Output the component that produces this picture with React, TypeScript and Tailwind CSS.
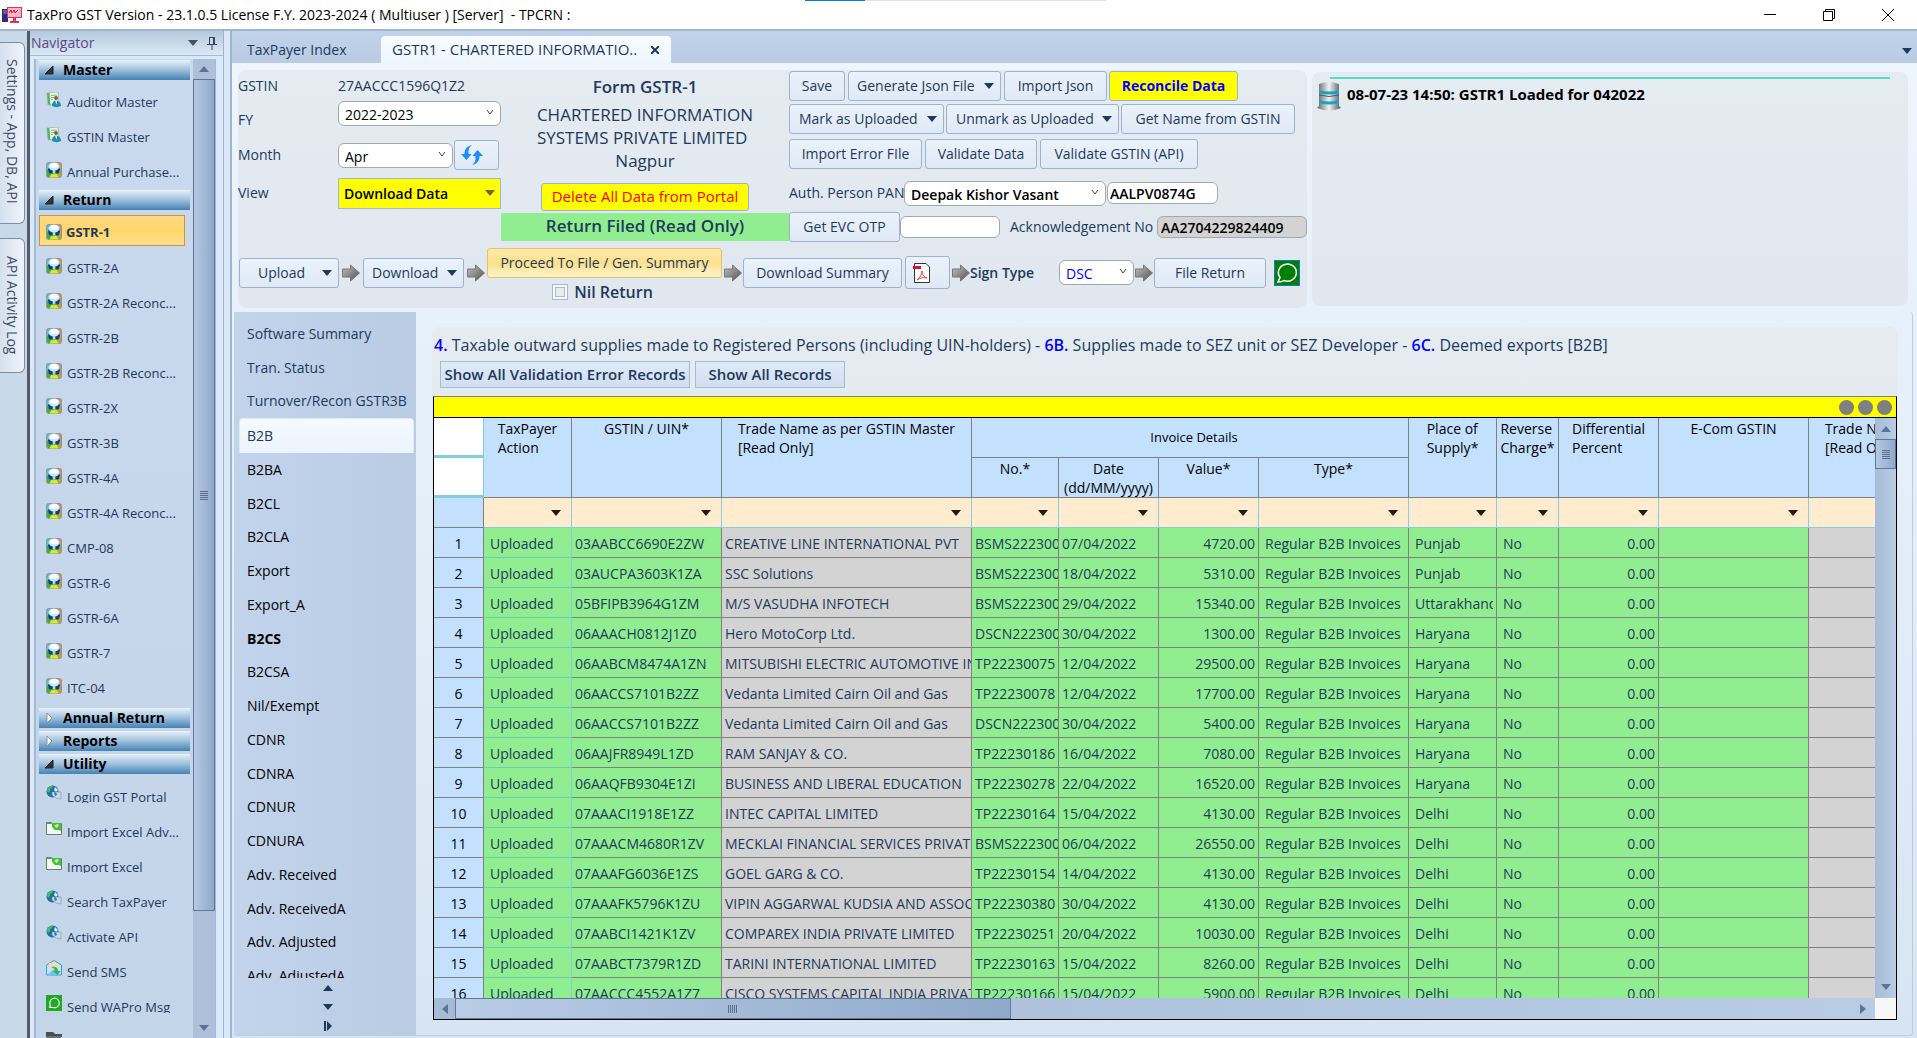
import type { ReactNode } from 'react';

type NavIconKind = 'user' | 'ball' | 'globe' | 'excel' | 'sms' | 'wa' | 'folder';

interface NavItem {
  label: string;
  icon: NavIconKind;
}

const masterItems: NavItem[] = [
  { label: 'Auditor Master', icon: 'user' },
  { label: 'GSTIN Master', icon: 'user' },
  { label: 'Annual Purchase...', icon: 'ball' },
];

const returnItems = [
  'GSTR-2A',
  'GSTR-2A Reconc...',
  'GSTR-2B',
  'GSTR-2B Reconc...',
  'GSTR-2X',
  'GSTR-3B',
  'GSTR-4A',
  'GSTR-4A Reconc...',
  'CMP-08',
  'GSTR-6',
  'GSTR-6A',
  'GSTR-7',
  'ITC-04',
];

const utilityItems: NavItem[] = [
  { label: 'Login GST Portal', icon: 'globe' },
  { label: 'Import Excel Adv...', icon: 'excel' },
  { label: 'Import Excel', icon: 'excel' },
  { label: 'Search TaxPayer', icon: 'globe' },
  { label: 'Activate API', icon: 'globe' },
  { label: 'Send SMS', icon: 'sms' },
  { label: 'Send WAPro Msg', icon: 'wa' },
  { label: '', icon: 'folder' },
];

const sections = [
  'Software Summary',
  'Tran. Status',
  'Turnover/Recon GSTR3B',
  'B2B',
  'B2BA',
  'B2CL',
  'B2CLA',
  'Export',
  'Export_A',
  'B2CS',
  'B2CSA',
  'Nil/Exempt',
  'CDNR',
  'CDNRA',
  'CDNUR',
  'CDNURA',
  'Adv. Received',
  'Adv. ReceivedA',
  'Adv. Adjusted',
  'Adv. AdjustedA',
];

// gstin, trade name, invoice no, date, value, place of supply
const rows = [
  ['03AABCC6690E2ZW', 'CREATIVE LINE INTERNATIONAL PVT', 'BSMS22230012', '07/04/2022', '4720.00', 'Punjab'],
  ['03AUCPA3603K1ZA', 'SSC Solutions', 'BSMS22230027', '18/04/2022', '5310.00', 'Punjab'],
  ['05BFIPB3964G1ZM', 'M/S VASUDHA INFOTECH', 'BSMS22230041', '29/04/2022', '15340.00', 'Uttarakhand'],
  ['06AAACH0812J1Z0', 'Hero MotoCorp Ltd.', 'DSCN22230018', '30/04/2022', '1300.00', 'Haryana'],
  ['06AABCM8474A1ZN', 'MITSUBISHI ELECTRIC AUTOMOTIVE INDIA', 'TP22230075', '12/04/2022', '29500.00', 'Haryana'],
  ['06AACCS7101B2ZZ', 'Vedanta Limited Cairn Oil and Gas', 'TP22230078', '12/04/2022', '17700.00', 'Haryana'],
  ['06AACCS7101B2ZZ', 'Vedanta Limited Cairn Oil and Gas', 'DSCN22230021', '30/04/2022', '5400.00', 'Haryana'],
  ['06AAJFR8949L1ZD', 'RAM SANJAY & CO.', 'TP22230186', '16/04/2022', '7080.00', 'Haryana'],
  ['06AAQFB9304E1ZI', 'BUSINESS AND LIBERAL EDUCATION', 'TP22230278', '22/04/2022', '16520.00', 'Haryana'],
  ['07AAACI1918E1ZZ', 'INTEC CAPITAL LIMITED', 'TP22230164', '15/04/2022', '4130.00', 'Delhi'],
  ['07AAACM4680R1ZV', 'MECKLAI FINANCIAL SERVICES PRIVATE', 'BSMS22230009', '06/04/2022', '26550.00', 'Delhi'],
  ['07AAAFG6036E1ZS', 'GOEL GARG & CO.', 'TP22230154', '14/04/2022', '4130.00', 'Delhi'],
  ['07AAAFK5796K1ZU', 'VIPIN AGGARWAL KUDSIA AND ASSOCIATES', 'TP22230380', '30/04/2022', '4130.00', 'Delhi'],
  ['07AABCI1421K1ZV', 'COMPAREX INDIA PRIVATE LIMITED', 'TP22230251', '20/04/2022', '10030.00', 'Delhi'],
  ['07AABCT7379R1ZD', 'TARINI INTERNATIONAL LIMITED', 'TP22230163', '15/04/2022', '8260.00', 'Delhi'],
  ['07AACCC4552A1Z7', 'CISCO SYSTEMS CAPITAL INDIA PRIVATE', 'TP22230166', '15/04/2022', '5900.00', 'Delhi'],
];

const colWidths = [50, 88, 150, 250, 87, 100, 100, 150, 88, 62, 100, 150, 250];

function Triangle({ dir = 'down', className = '' }: { dir?: 'down' | 'up' | 'left' | 'right'; className?: string }) {
  const d = {
    down: 'M0 2h10L5 8z',
    up: 'M0 8h10L5 2z',
    left: 'M8 0v10L2 5z',
    right: 'M2 0v10l6-5z',
  }[dir];
  return (
    <svg viewBox="0 0 10 10" className={`h-[10px] w-[10px] shrink-0 ${className}`} fill="currentColor" aria-hidden="true">
      <path d={d} />
    </svg>
  );
}

function NavIcon({ kind }: { kind: NavIconKind }) {
  return (
    <svg viewBox="0 0 16 16" className="h-4 w-4 shrink-0" aria-hidden="true">
      {kind === 'ball' && (
        <>
          <rect width="16" height="16" rx="3" fill="#8f979d" />
          <path d="M1 8h6v7H3c-1 0-2-1-2-2z" fill="#3fae3c" />
          <path d="M9 8h6v5c0 1-1 2-2 2H9z" fill="#b9a52e" />
          <path d="M1 3c0-1 1-2 2-2h2L2 7H1z" fill="#4fc3cf" />
          <path d="M15 3c0-1-1-2-2-2h-2l3 6h1z" fill="#d98b5a" />
          <path d="M2 7l2-2h8l2 2-1 4-3 1-1-3H7l-1 3-3-1z" fill="#123f83" />
          <ellipse cx="8" cy="4.500" rx="5.500" ry="4" fill="#c9e9f8" />
          <ellipse cx="8" cy="3.500" rx="4.500" ry="2.500" fill="#fff" />
          <path d="M6.500 8h3l-.5 3H7z" fill="#9fdcf5" />
          <path d="M3.500 15.500l2-4 2 1 .5-2 .5 2 2-1 2 4z" fill="#d3ee2b" />
        </>
      )}
      {kind === 'user' && (
        <>
          <path d="M1 1l11-1 1 12-11 1z" fill="#eef6e6" stroke="#7fa98c" strokeWidth="0.600" />
          <path d="M1 1h2.500l1 12-2.500-.5z" fill="#54b56b" />
          <path d="M5 3.500l6-.5M5 5.500h3M5 7.500h2" stroke="#7dbb7e" />
          <circle cx="10" cy="6" r="2" fill="#8a5a3a" />
          <path d="M6 14c0-4 2-5.500 4-5.500s5 1.500 5 5.500c-3 1.500-6 1.500-9 0z" fill="#1a8fb5" />
          <path d="M9.200 8.500h1.800l-.6 4.500z" fill="#fff" />
        </>
      )}
      {kind === 'globe' && (
        <>
          <circle cx="6.500" cy="6.500" r="6" fill="#1f6fae" />
          <path d="M1 5c1-3 4-4.500 6-4.500L6 3 4 4v2L2 8z" fill="#4fc04a" />
          <path d="M9 2l3 3-2 2-2-2z" fill="#d6f0fb" />
          <path d="M6 7h9v7l-5-1-4-3z" fill="#c7dbe6" stroke="#7b95a5" strokeWidth="0.600" />
          <path d="M8 8l2-1 1 3-2 1z" fill="#2a7db8" />
        </>
      )}
      {kind === 'excel' && (
        <>
          <path d="M.5 2.500h5l1 1h9v11H.5z" fill="#f3f6f4" stroke="#6d7a72" />
          <path d="M1 2h4l1 2H1z" fill="#39a845" />
          <path d="M6 3h9v8l-2-1-4 0-3-3z" fill="#43c22f" />
          <path d="M8 6c2-2 4-2 5-1l-2 3z" fill="#c9f5b8" />
        </>
      )}
      {kind === 'sms' && (
        <>
          <path d="M.5 5L8 .5 15.500 5v10H.5z" fill="#bfe6f7" stroke="#3d9ccb" />
          <path d="M3 3h9v5H3z" fill="#f6d9a6" />
          <path d="M1 15l7-6 7 6z" fill="#6cc5ea" />
          <path d="M5 7c5-1 7 1 7 4h3l-4 4-4-4h2c0-2-1-3-4-4z" fill="#2fb457" />
        </>
      )}
      {kind === 'wa' && (
        <>
          <rect width="16" height="16" fill="#1fa91f" />
          <path d="M3.500 12.500l.7-2.500A4.800 4.800 0 1 1 6.500 12.300z" fill="none" stroke="#fff" strokeWidth="1.100" />
        </>
      )}
      {kind === 'folder' && (
        <>
          <path d="M0 2h7l2 2h7v3H0z" fill="#4a4d52" />
          <path d="M1 6h14v8H1z" fill="#6b6e73" />
        </>
      )}
    </svg>
  );
}

function NavHeading({ label, open = true }: { label: string; open?: boolean }) {
  return (
    <button className="flex h-[20px] w-[151px] shrink-0 items-center bg-linear-to-b from-[#e9f2f9] via-[#9dbfdc] to-[#4482b4] pl-[6px] text-left text-sm font-bold text-black">
      <svg viewBox="0 0 10 10" className="mr-2 h-[10px] w-[10px]" aria-hidden="true">
        {open ? <path d="M0 9h8V1z" fill="#333" stroke="#222" /> : <path d="M2 0v10l5-5z" fill="#fff" stroke="#8792a0" />}
      </svg>
      {label}
    </button>
  );
}

function NavRow({ item, clipped = false }: { item: NavItem; clipped?: boolean }) {
  return (
    <a href="#" className="flex h-[35px] shrink-0 items-center gap-[5px] pl-[7px]">
      <span className="-mt-1">
        <NavIcon kind={item.icon} />
      </span>
      <span className={clipped ? 'h-4 overflow-hidden leading-5 whitespace-nowrap' : 'pt-px whitespace-nowrap'}>{item.label}</span>
    </a>
  );
}

function Button({ className = '', children }: { className?: string; children: ReactNode }) {
  return (
    <button
      className={`flex h-[30px] shrink-0 items-center justify-center rounded-[3px] border border-[#9db2cf] bg-linear-to-b from-[#eaf2fb] to-[#dfe9f5] whitespace-nowrap ${className}`}
    >
      {children}
    </button>
  );
}

function MenuButton({ className = '', children }: { className?: string; children: ReactNode }) {
  return (
    <button
      className={`flex h-[30px] shrink-0 items-center justify-between rounded-[3px] border border-[#9db2cf] bg-linear-to-b from-[#eaf2fb] to-[#dfe9f5] pr-[6px] whitespace-nowrap ${className}`}
    >
      {children}
      <Triangle />
    </button>
  );
}

function Select({ id, value, className }: { id: string; value: string; className: string }) {
  return (
    <span className="relative flex shrink-0">
      <select
        id={id}
        className={`h-[25px] appearance-none rounded-[6px] border border-[#a5a7ab] bg-white pt-[3px] pl-[6px] text-sm ${className}`}
      >
        <option>{value}</option>
      </select>
      <svg viewBox="0 0 8 8" className="pointer-events-none absolute top-2 right-[7px] h-2 w-2" fill="none" stroke="#444" aria-hidden="true">
        <path d="M1 1l3 4 3-4" />
      </svg>
    </span>
  );
}

function FlowArrow() {
  return (
    <svg viewBox="0 0 18 18" className="h-[18px] w-[18px] shrink-0" aria-hidden="true">
      <defs>
        <linearGradient id="flow" x1="0" y1="0" x2="1" y2="1">
          <stop offset="0" stopColor="#c4c4c4" />
          <stop offset="1" stopColor="#4f4f4f" />
        </linearGradient>
      </defs>
      <path d="M0.500 5h8V1l9 8-9 8v-4h-8z" fill="url(#flow)" stroke="#777" />
    </svg>
  );
}

function TitleBar() {
  return (
    <header className="relative flex h-[31px] shrink-0 items-center border-b-2 border-[#9fb6cc] bg-white pl-[2px] text-[14px] text-black">
      <svg viewBox="0 0 20 16" className="h-4 w-5" aria-hidden="true">
        <path d="M0 2h6v13H0z" fill="#2c2d77" />
        <path d="M1 4h4M1 6h4" stroke="#8c8fd0" />
        <rect x="5.500" y="0.500" width="14" height="10" fill="#f4b9c8" stroke="#e0315f" />
        <path d="M7 6l2-3 1 3 2-3 1 3 3-3" fill="none" stroke="#d3124a" />
        <path d="M11 11h3v3h3v2H8v-2h3z" fill="#e0315f" />
      </svg>
      <h1 className="ml-[5px] grow whitespace-pre">
        TaxPro GST Version - 23.1.0.5 License F.Y. 2023-2024 ( Multiuser ) [Server]{'  '}- TPCRN :
      </h1>
      {/* progress strip over the top edge of the window */}
      <div className="absolute top-0 left-[42%] flex w-[301px] bg-[#e3e3e3]">
        <span className="h-px w-[60px] bg-[#0a78d7]" />
      </div>
      <button aria-label="Minimize" className="flex w-[59px] justify-center">
        <svg viewBox="0 0 12 12" className="h-3 w-3" stroke="#000"><path d="M0 5.500h12" /></svg>
      </button>
      <button aria-label="Restore" className="flex w-[59px] justify-center">
        <svg viewBox="0 0 12 12" className="h-3 w-3" fill="none" stroke="#000"><path d="M.5 2.500h9v9h-9zM2.500 2.500v-2h9v9h-2" /></svg>
      </button>
      <button aria-label="Close" className="flex w-[59px] justify-center">
        <svg viewBox="0 0 12 12" className="h-3 w-3" stroke="#000"><path d="M0 0l12 12M12 0L0 12" /></svg>
      </button>
    </header>
  );
}

function DockTabs() {
  return (
    <aside className="flex w-[27px] shrink-0 flex-col gap-[14px] bg-[#cad9ea] pt-[11px] text-[14px] text-[#3c4a66]">
      <button className="flex h-[182px] w-[25px] items-center justify-center rounded-r-[6px] border border-l-0 border-[#7d8ca3] bg-linear-to-r from-[#d5e0ee] to-[#eef4fb] pb-1 whitespace-nowrap [writing-mode:vertical-rl]">
        Settings - App, DB, API
      </button>
      <button className="flex h-[135px] w-[25px] items-center justify-center rounded-r-[6px] border border-l-0 border-[#7d8ca3] bg-linear-to-r from-[#d5e0ee] to-[#eef4fb] whitespace-nowrap [writing-mode:vertical-rl]">
        API Activity Log
      </button>
    </aside>
  );
}

function Navigator() {
  return (
    <nav className="flex w-[197px] shrink-0 flex-col border-r border-l-[3px] border-r-[#9db3cd] border-l-[#555b66] bg-[#dbe8f7] text-[13px] text-[#1e395b]">
      <div className="flex h-[25px] shrink-0 items-center border-b border-[#a8bdd4] bg-linear-to-b from-[#b4c9de] to-[#dce8f5] pr-[5px] pl-px">
        <span className="grow text-[14px] text-[#5b4a86]">Navigator</span>
        <Triangle className="mr-2 text-[#4b4f5a]" />
        <svg viewBox="0 0 12 14" className="h-[14px] w-3" stroke="#3c4454" fill="none" aria-hidden="true">
          <path d="M3.500 1v7M8.500 1v7M3 1.500h6M1 8.500h10M6 9v5M7.500 1v7" />
        </svg>
      </div>
      <div className="mt-[3px] mr-[7px] ml-1 flex min-h-0 grow border-r border-l-2 border-[#a4b9d3] bg-linear-to-b from-[#cad9ee] to-[#c3d5e8]">
        <div className="flex min-w-0 grow flex-col overflow-hidden pt-px pl-[3px]">
          <NavHeading label="Master" />
          <div className="flex shrink-0 flex-col pt-1 pb-px">
            {masterItems.map((item) => (
              <NavRow key={item.label} item={item} />
            ))}
          </div>
          <NavHeading label="Return" />
          <a
            href="#"
            aria-current="page"
            className="mt-[5px] mb-1 flex h-[31px] w-[146px] shrink-0 items-center gap-1 border border-[#c9973f] bg-linear-to-b from-[#ffd983] via-[#ffd66b] to-[#ffdf8c] pt-[3px] pl-[6px] font-bold"
          >
            <NavIcon kind="ball" />
            GSTR-1
          </a>
          {returnItems.map((label) => (
            <NavRow key={label} item={{ label, icon: 'ball' }} />
          ))}
          <div className="flex shrink-0 flex-col gap-[3px] pt-[3px] pb-[3px]">
            <NavHeading label="Annual Return" open={false} />
            <NavHeading label="Reports" open={false} />
            <NavHeading label="Utility" />
          </div>
          {utilityItems.map((item) => (
            <NavRow key={item.label} item={item} clipped />
          ))}
        </div>
        <div className="flex w-[22px] shrink-0 flex-col items-center bg-[#aebfda] text-[#5e7299]">
          <div className="flex h-5 items-center">
            <Triangle dir="up" />
          </div>
          <div className="flex w-full grow items-center justify-center border border-[#5f7896] bg-linear-to-r from-[#b6c9e3] to-[#8fa9ca]">
            <span className="h-[9px] w-2 bg-[repeating-linear-gradient(#5f6f8a_0_1px,transparent_1px_2px)]" />
          </div>
          <div className="flex h-[127px] items-end pb-[5px]">
            <Triangle />
          </div>
        </div>
      </div>
    </nav>
  );
}

function FormPanel() {
  return (
    <section className="flex shrink-0 flex-col rounded-lg bg-linear-to-b from-[#e4ebf1] to-[#e0e7ef] pt-px">
      <div className="flex h-[176px]">
        <div className="flex w-[263px] flex-col">
          <div className="flex h-[30px] items-center">
            <span className="w-[100px]">GSTIN</span>
            <span className="font-medium">27AACCC1596Q1Z2</span>
          </div>
          <div className="flex h-[34px]">
            <label htmlFor="fy" className="w-[100px] self-center pt-1">FY</label>
            <Select id="fy" value="2022-2023" className="w-[163px] font-medium text-black" />
          </div>
          <div className="flex h-[38px] items-center pt-[2px]">
            <label htmlFor="month" className="w-[100px]">Month</label>
            <Select id="month" value="Apr" className="w-[115px] font-medium text-black" />
            <button aria-label="Refresh" className="ml-px flex h-[30px] w-[45px] items-center rounded-[3px] border border-[#9db2cf] bg-linear-to-b from-[#eaf2fb] to-[#dfe9f5] pl-[6px]">
              <svg viewBox="0 0 22 20" className="h-5 w-[22px]" fill="#1e8bff" aria-hidden="true">
                <path d="M11 0C6 1 3.500 4 3.500 9H0l5.500 6 5-6H7.500C7 5 8 2 11 0z" />
                <path d="M11 20c5-1 7.500-4 7.500-9H22l-5.500-6-5 6h3c.5 4-.5 7-3.500 9z" />
              </svg>
            </button>
          </div>
          <div className="flex h-[36px] items-end">
            <label htmlFor="view" className="w-[100px] self-center pt-1">View</label>
            <span className="relative flex">
              <select id="view" className="h-[31px] w-[163px] appearance-none border border-[#9db7dd] bg-[#ff0] pl-[5px] font-semibold text-black">
                <option>Download Data</option>
              </select>
              <Triangle className="pointer-events-none absolute top-[10px] right-[6px] text-[#6b6b20]" />
            </span>
          </div>
        </div>

        <div className="flex w-[288px] flex-col items-center text-center">
          <h2 className="pt-1 text-[17px] leading-6 font-semibold">Form GSTR-1</h2>
          <p className="mt-1 text-left text-[17px] leading-[23px] whitespace-nowrap">
            CHARTERED INFORMATION
            <br />
            SYSTEMS PRIVATE LIMITED
          </p>
          <p className="text-[17px] leading-6">Nagpur</p>
          <button className="mt-[10px] h-7 w-[208px] rounded-[3px] border border-[#9db2cf] bg-[#ff0] text-[15px] font-medium text-[#f00]">
            Delete All Data from Portal
          </button>
          <div className="mt-[2px] h-7 w-full shrink-0 bg-[#90ee90] text-[17px] leading-[26px] font-semibold">Return Filed (Read Only)</div>
        </div>

        <div className="flex flex-col">
          <div className="flex">
            <Button className="mr-[3px] w-14">Save</Button>
            <MenuButton className="mr-[3px] w-[153px] pl-2">Generate Json File</MenuButton>
            <Button className="mr-[2px] w-[103px]">Import Json</Button>
            <button className="h-[30px] w-[129px] rounded-[3px] border border-[#9db2cf] bg-[#ff0] font-bold text-[#00f]">Reconcile Data</button>
          </div>
          <div className="mt-[3px] flex gap-[2px]">
            <MenuButton className="w-[155px] pl-[9px]">Mark as Uploaded</MenuButton>
            <MenuButton className="w-[173px] pl-[9px]">Unmark as Uploaded</MenuButton>
            <Button className="w-[174px]">Get Name from GSTIN</Button>
          </div>
          <div className="mt-[5px] flex gap-[3px]">
            <Button className="w-[133px]">Import Error FIle</Button>
            <Button className="w-[112px]">Validate Data</Button>
            <Button className="w-[158px]">Validate GSTIN (API)</Button>
          </div>
          <div className="mt-[11px] flex h-[26px] items-center">
            <label htmlFor="pan-name" className="w-[115px] whitespace-nowrap">Auth. Person PAN</label>
            <Select id="pan-name" value="Deepak Kishor Vasant" className="w-[202px] font-semibold text-black" />
            <input aria-label="PAN" defaultValue="AALPV0874G" className="ml-px h-[22px] w-[111px] rounded-[6px] border border-[#a5a7ab] bg-white px-[2px] font-semibold text-black" />
          </div>
          <div className="mt-[7px] flex h-7 items-center">
            <Button className="w-[111px]">Get EVC OTP</Button>
            <input aria-label="EVC OTP" className="h-[22px] w-[100px] rounded-[6px] border border-[#a5a7ab] bg-white px-1" />
            <label htmlFor="ack" className="ml-[10px] w-[147px] whitespace-nowrap">Acknowledgement No</label>
            <input id="ack" readOnly defaultValue="AA2704229824409" className="h-[22px] w-[150px] rounded-[6px] border border-[#a5a7ab] bg-[#d3d3d3] px-[3px] font-semibold text-black" />
          </div>
        </div>
      </div>

      <div className="flex h-[61px] items-center px-px pb-[10px]">
        <MenuButton className="mr-[3px] w-[100px] pl-[18px]">Upload</MenuButton>
        <FlowArrow />
        <MenuButton className="mx-[3px] w-[101px] pl-2">Download</MenuButton>
        <FlowArrow />
        <div className="ml-[2px] flex flex-col items-center self-start pt-px">
          <button className="h-[30px] w-[235px] rounded-[3px] border border-[#e8c35c] bg-linear-to-b from-[#fbe9ad] via-[#fce08a] to-[#fff3c9]">
            Proceed To File / Gen. Summary
          </button>
          <label className="mt-[2px] flex items-center gap-[6px] pr-1 text-[16px] leading-6 font-semibold">
            <input type="checkbox" className="h-4 w-4 appearance-none border border-[#a5bbdd] bg-[#e9ecef] shadow-[inset_0_0_0_2px_#f4f7fb,inset_0_0_0_3px_#b4b9c0]" />
            Nil Return
          </label>
        </div>
        <span className="mr-px ml-[2px]"><FlowArrow /></span>
        <Button className="w-[159px]">Download Summary</Button>
        <button aria-label="PDF" className="mr-[2px] ml-[3px] flex h-[33px] w-[45px] items-center rounded-[3px] border border-[#9db2cf] bg-linear-to-b from-[#eaf2fb] to-[#dfe9f5] pl-[7px]">
          <svg viewBox="0 0 18 20" className="h-5 w-[18px]" fill="none" aria-hidden="true">
            <path d="M1.500.5H13l3.500 3.500v15.500h-15z" fill="#fff" stroke="#333" />
            <rect y="3" width="8" height="3" fill="#d8141c" />
            <path d="M4 17c3-2 5-6 5-9 0 4 2 6 5 7-4-1-7 0-10 2z" stroke="#e0474c" />
          </svg>
        </button>
        <FlowArrow />
        <label htmlFor="sign" className="w-[89px] font-semibold">Sign Type</label>
        <Select id="sign" value="DSC" className="w-[75px] font-medium text-[#00f]" />
        <span className="mx-px"><FlowArrow /></span>
        <Button className="w-[112px]">File Return</Button>
        <button aria-label="WhatsApp" className="ml-2 flex h-[26px] w-[26px] items-center justify-center border border-[#0a78d7] bg-[#008000]">
          <svg viewBox="0 0 22 22" className="h-[22px] w-[22px]" fill="none" stroke="#fff" strokeWidth="1.500" aria-hidden="true">
            <path d="M2 20l2-4.500A9 8.500 0 1 1 8 18.500C6 20 4 20 2 20z" />
          </svg>
        </button>
      </div>
    </section>
  );
}

function LogPanel() {
  return (
    <section className="mt-[2px] mr-[9px] mb-[2px] min-w-0 grow rounded-lg bg-linear-to-b from-[#e4ebf1] to-[#e0e7ef] pt-[5px]">
      <div className="mx-[18px] h-[2px] bg-[#55dccb]" />
      <div className="flex items-start gap-[6px] pt-[2px] pl-[5px] text-[15px] leading-5 font-bold text-black">
        <svg viewBox="0 0 24 30" className="h-[30px] w-6" aria-hidden="true">
          <defs>
            <linearGradient id="db">
              <stop offset="0" stopColor="#596066" />
              <stop offset="0.500" stopColor="#f2f2f2" />
              <stop offset="1" stopColor="#50575c" />
            </linearGradient>
          </defs>
          <path d="M2 3q10-4 20 0v22l2 2q-12 5-24 0l2-2z" fill="url(#db)" />
          <path d="M2 9q10 3 20 0v3q-10 3-20 0zM2 19q10 3 20 0v3q-10 3-20 0z" fill="#12a5c4" />
          <path d="M2 14q10 3 20 0" fill="none" stroke="#53595e" />
        </svg>
        <span className="pt-[3px]">08-07-23 14:50: GSTR1 Loaded for 042022</span>
      </div>
    </section>
  );
}

function HeadCell({ children, rowSpan = 2, centered = false }: { children?: ReactNode; rowSpan?: number; centered?: boolean }) {
  return (
    <th rowSpan={rowSpan} className="overflow-hidden border-r border-b border-[#808080] p-0 align-top font-normal whitespace-nowrap">
      <div className="flex justify-center pt-px">
        <div className={centered ? 'text-center' : 'text-left'}>{children}</div>
      </div>
    </th>
  );
}

function InvoiceTable() {
  const green = 'overflow-hidden border-r border-b border-[#808080] bg-[#90ee90] px-[3px] pt-[2px] pb-0';
  return (
    <table className="w-[1625px] table-fixed border-separate border-spacing-0 text-sm whitespace-nowrap">
      <colgroup>
        {colWidths.map((width, i) => (
          <col key={i} style={{ width }} />
        ))}
      </colgroup>
      <thead className="bg-[#c3e0ff] leading-[19px] text-black">
        <tr className="h-[40px]">
          <th aria-label="Select all" className="border-r border-b-3 border-[#7fd0dc] bg-white p-0" />
          <HeadCell>TaxPayer<br />Action</HeadCell>
          <HeadCell>GSTIN / UIN*</HeadCell>
          <HeadCell>Trade Name as per GSTIN Master<br />[Read Only]</HeadCell>
          <th colSpan={4} className="border-r border-b border-[#808080] py-0 pr-0 pl-2 text-[13px] font-normal">Invoice Details</th>
          <HeadCell>Place of<br />Supply*</HeadCell>
          <HeadCell>Reverse<br />Charge*</HeadCell>
          <HeadCell>Differential<br />Percent</HeadCell>
          <HeadCell>E-Com GSTIN</HeadCell>
          <HeadCell>Trade Name as per GSTIN Master<br />[Read Only]</HeadCell>
        </tr>
        <tr className="h-[40px]">
          <th aria-label="Row number" className="border-r border-b-3 border-[#7fd0dc] bg-white p-0" />
          <HeadCell rowSpan={1}>No.*</HeadCell>
          <HeadCell rowSpan={1} centered>Date<br />(dd/MM/yyyy)</HeadCell>
          <HeadCell rowSpan={1}>Value*</HeadCell>
          <HeadCell rowSpan={1}>Type*</HeadCell>
        </tr>
        <tr className="h-[30px]">
          <td className="border-r border-b border-[#808080] p-0" />
          {colWidths.slice(1).map((_, i) => (
            <td key={i} className="border-r border-b border-[#7fd0dc] bg-[#ffebcd] p-0">
              <button aria-label="Filter" className="ml-auto flex pr-[10px] text-[#1c1c1c]">
                <Triangle />
              </button>
            </td>
          ))}
        </tr>
      </thead>
      <tbody>
        {rows.map(([gstin, name, no, date, value, place], i) => (
          <tr key={i} className="h-[30px]">
            <td className="border-r border-b border-[#808080] bg-[#c3e0ff] px-0 pt-[2px] pb-0 text-center text-black">{i + 1}</td>
            <td className="border-r border-b border-r-[#7fd0dc] border-b-[#6fc7b4] bg-[#90ee90] px-[6px] pt-[2px] pb-0">Uploaded</td>
            <td className={green}>{gstin}</td>
            <td className="overflow-hidden border-r border-b border-[#808080] bg-[#d3d3d3] px-[3px] pt-[2px] pb-0">{name}</td>
            <td className={green}>{no}</td>
            <td className={green}>{date}</td>
            <td className={`${green} text-right`}>{value}</td>
            <td className={`${green} pl-[6px]`}>Regular B2B Invoices</td>
            <td className={`${green} pl-[6px]`}>
              <div className="overflow-hidden">{place}</div>
            </td>
            <td className={`${green} pl-[6px]`}>No</td>
            <td className={`${green} text-right`}>0.00</td>
            <td className={green} />
            <td className="border-r border-b border-[#808080] bg-[#d3d3d3] p-0" />
          </tr>
        ))}
      </tbody>
    </table>
  );
}

function Grid() {
  return (
    <div className="mr-px ml-px flex min-h-0 grow flex-col border border-black border-t-[#808080] bg-white">
      <div className="flex h-[21px] shrink-0 items-center justify-end gap-1 border-b border-black bg-[#ff0] pr-1">
        <span className="h-[15px] w-[15px] rounded-full bg-[#808080]" />
        <span className="h-[15px] w-[15px] rounded-full bg-[#808080]" />
        <span className="h-[15px] w-[15px] rounded-full bg-[#808080]" />
      </div>
      <div className="flex min-h-0 grow">
        <div className="min-w-0 grow overflow-hidden">
          <InvoiceTable />
        </div>
        <div className="flex w-[21px] shrink-0 flex-col items-center justify-between bg-linear-to-r from-[#a6bbd6] to-[#b9cce4] text-[#5e7299]">
          <div className="flex w-full flex-col items-center">
            <div className="flex h-[21px] items-center">
              <Triangle dir="up" />
            </div>
            <div className="flex h-[30px] w-full items-center justify-center border border-[#5f7896] bg-linear-to-r from-[#b6c9e3] to-[#8fa9ca]">
              <span className="h-[9px] w-2 bg-[repeating-linear-gradient(#5f6f8a_0_1px,transparent_1px_2px)]" />
            </div>
          </div>
          <Triangle className="mb-[6px]" />
        </div>
      </div>
      <div className="flex h-[21px] shrink-0 items-center bg-linear-to-r from-[#a6bbd6] to-[#b9cce4] text-[#5e7299]">
        <span className="flex w-[21px] justify-center"><Triangle dir="left" /></span>
        <div className="flex h-full w-[38%] items-center justify-center border border-[#5f7896] bg-linear-to-r from-[#b9cce6] to-[#8fa9ca]">
          <span className="h-2 w-[9px] bg-[repeating-linear-gradient(90deg,#5f6f8a_0_1px,transparent_1px_2px)]" />
        </div>
        <Triangle dir="right" className="mr-[7px] ml-auto" />
        <span className="h-full w-[21px] bg-[#f7f7f7]" />
      </div>
    </div>
  );
}

function SectionTabs() {
  return (
    <div className="flex w-[182px] shrink-0 flex-col bg-linear-to-r from-[#c2d4eb] to-[#b9cce4] pt-[5px] pl-[5px]">
      <div className="min-h-0 grow overflow-hidden">
        <div className="flex h-[676px] flex-col">
          {sections.map((label, i) => (
            <button
              key={label}
              className={
                label === 'B2B'
                  ? 'w-[175px] flex-1 rounded-t-[4px] border border-b-0 border-[#dfe9f6] bg-linear-to-b from-[#f5faff] to-[#ebf3fd] pl-[7px] text-left font-medium'
                  : label === 'B2CS'
                    ? 'flex-1 pl-2 text-left font-bold text-black'
                    : i < 3
                      ? 'flex-1 pl-2 text-left whitespace-nowrap'
                      : 'flex-1 pl-2 text-left text-black'
              }
            >
              {label}
            </button>
          ))}
        </div>
      </div>
      <div className="flex h-[57px] shrink-0 flex-col items-center justify-around">
        <Triangle dir="up" />
        <Triangle />
        <svg viewBox="0 0 10 10" className="h-[10px] w-[10px]" fill="currentColor" aria-hidden="true">
          <path d="M1 0h2v10H1zM4 0v10l5-5z" />
        </svg>
      </div>
    </div>
  );
}

export default function App() {
  return (
    <div className="flex h-screen flex-col overflow-hidden bg-[#dbe8f7] font-['Open_Sans','Noto_Sans',sans-serif] text-sm text-[#1e395b]">
      <TitleBar />
      <div className="flex min-h-0 grow">
        <DockTabs />
        <Navigator />
        <main className="ml-[6px] flex min-w-0 grow flex-col border-l-2 border-[#9db3cd] bg-linear-to-b from-[#eef6fe] to-[#d7e5f2]">
          <div className="flex h-8 shrink-0 items-end bg-linear-to-b from-[#c0d3ea] to-[#b9cce4]">
            <button className="h-[27px] w-[149px] pl-[15px] text-left">TaxPayer Index</button>
            <div className="flex h-[27px] w-[290px] items-center justify-between rounded-t-[4px] bg-linear-to-b from-[#f8fbff] to-[#eef6fe] pr-3 pl-[11px] text-[15px] font-medium">
              <span className="whitespace-nowrap">GSTR1 - CHARTERED INFORMATIO..</span>
              <button aria-label="Close tab">
                <svg viewBox="0 0 8 8" className="h-2 w-2" stroke="currentColor" strokeWidth="2"><path d="M0 0l8 8M8 0L0 8" /></svg>
              </button>
            </div>
            <button aria-label="Tab list" className="mr-[5px] mb-[7px] ml-auto">
              <Triangle />
            </button>
          </div>

          <div className="flex gap-[5px] pt-[7px] pl-[6px]">
            <FormPanel />
            <LogPanel />
          </div>

          <div className="mt-1 mr-1 mb-[2px] ml-[2px] flex min-h-0 grow rounded-[4px] border-r border-b border-[#b9cce4]">
            <SectionTabs />
            <section className="my-[15px] mr-[14px] ml-4 flex min-w-0 grow flex-col rounded-t-lg bg-linear-to-b from-[#e4ebf1] to-[#dde6ef]">
              <h3 className="pt-[6px] pl-[2px] text-[16px] leading-6">
                <b className="font-semibold text-[#00f]">4.</b> Taxable outward supplies made to Registered Persons (including UIN-holders) -{' '}
                <b className="font-semibold text-[#00f]">6B.</b> Supplies made to SEZ unit or SEZ Developer -{' '}
                <b className="font-semibold text-[#00f]">6C.</b> Deemed exports [B2B]
              </h3>
              <div className="mt-1 mb-2 flex gap-[5px] pl-2 text-[15px] font-semibold">
                <button className="h-[27px] w-[250px] border border-[#a5b9d8] bg-linear-to-b from-[#dfeaf8] to-[#d0def0] whitespace-nowrap">
                  Show All Validation Error Records
                </button>
                <button className="h-[27px] w-[150px] border border-[#a5b9d8] bg-linear-to-b from-[#dfeaf8] to-[#d0def0] whitespace-nowrap">Show All Records</button>
              </div>
              <Grid />
            </section>
          </div>
        </main>
      </div>
    </div>
  );
}
